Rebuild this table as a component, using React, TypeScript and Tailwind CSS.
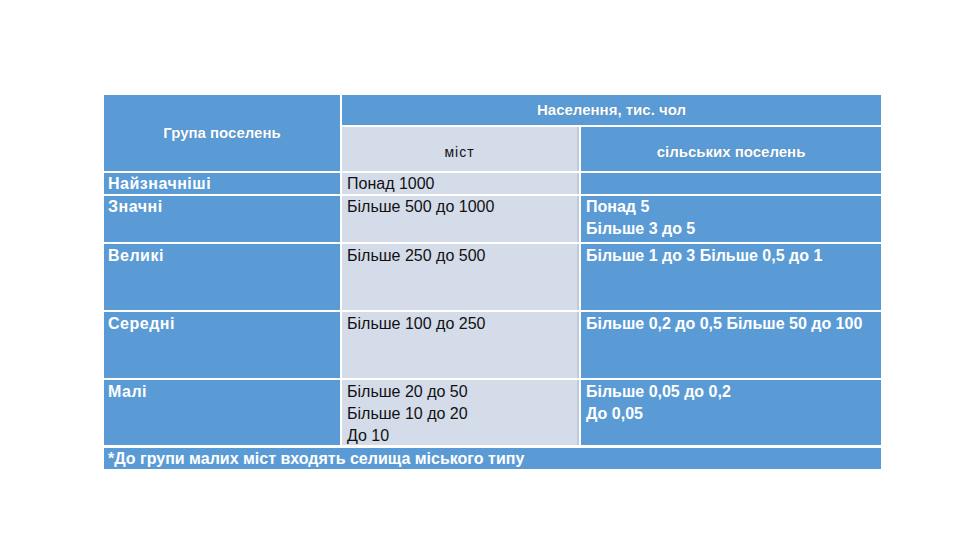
const font = { fontFamily: '"Liberation Sans", "Noto Sans", sans-serif' }

const blue = "bg-[#5b9bd5] text-white font-bold"
const light = "bg-[#d4dbe9] text-[#111] border-r-2 border-[#c3cad8]"

export default function App() {
  return (
    <div className="w-[960px] h-[540px] bg-white pt-[95px] pl-[104px]" style={font}>
      <div className="grid w-[777px] grid-cols-[236px_237px_300px] grid-rows-[30px_44px_21px_46px_66px_66px_65px_22px] gap-[2px] bg-white text-[16px] leading-[22px]">
        <div className={`${blue} row-span-2 flex items-center justify-center text-[15px] [text-shadow:0_0_1px_rgba(0,0,0,0.25)]`}>
          Група поселень
        </div>
        <div className={`${blue} col-span-2 flex items-center justify-center text-[15px] [text-shadow:0_0_1px_rgba(0,0,0,0.25)]`}>
          Населення, тис. чол
        </div>
        <div className={`${light} flex items-center justify-center pt-[6px] text-[14px] tracking-[1px]`}>міст</div>
        <div className={`${blue} flex items-center justify-center pt-[6px] text-[15px] [text-shadow:0_0_1px_rgba(0,0,0,0.25)]`}>
          сільських поселень
        </div>

        <div className={`${blue} px-[4px] tracking-[0.5px]`}>Найзначніші</div>
        <div className={`${light} px-[5px]`}>Понад 1000</div>
        <div className={blue}></div>

        <div className={`${blue} px-[4px] tracking-[0.5px]`}>Значні</div>
        <div className={`${light} px-[5px]`}>Більше 500 до 1000</div>
        <div className={`${blue} px-[5px]`}>
          Понад 5
          <br />
          Більше 3 до 5
        </div>

        <div className={`${blue} px-[4px] pt-[1px] tracking-[0.5px]`}>Великі</div>
        <div className={`${light} px-[5px] pt-[1px]`}>Більше 250 до 500</div>
        <div className={`${blue} px-[5px] pt-[1px]`}>Більше 1 до 3 Більше 0,5 до 1</div>

        <div className={`${blue} px-[4px] pt-[1px] tracking-[0.5px]`}>Середні</div>
        <div className={`${light} px-[5px] pt-[1px]`}>Більше 100 до 250</div>
        <div className={`${blue} px-[5px] pt-[1px]`}>Більше 0,2 до 0,5 Більше 50 до 100</div>

        <div className={`${blue} px-[4px] pt-[1px] tracking-[0.5px]`}>Малі</div>
        <div className={`${light} px-[5px] pt-[1px]`}>
          Більше 20 до 50
          <br />
          Більше 10 до 20
          <br />
          До 10
        </div>
        <div className={`${blue} px-[5px] pt-[1px]`}>
          Більше 0,05 до 0,2
          <br />
          До 0,05
        </div>

        <div className={`${blue} col-span-3 mt-[1px] px-[4px] text-[16px] leading-[21px]`}>
          *До групи малих міст входять селища міського типу
        </div>
      </div>
    </div>
  )
}
